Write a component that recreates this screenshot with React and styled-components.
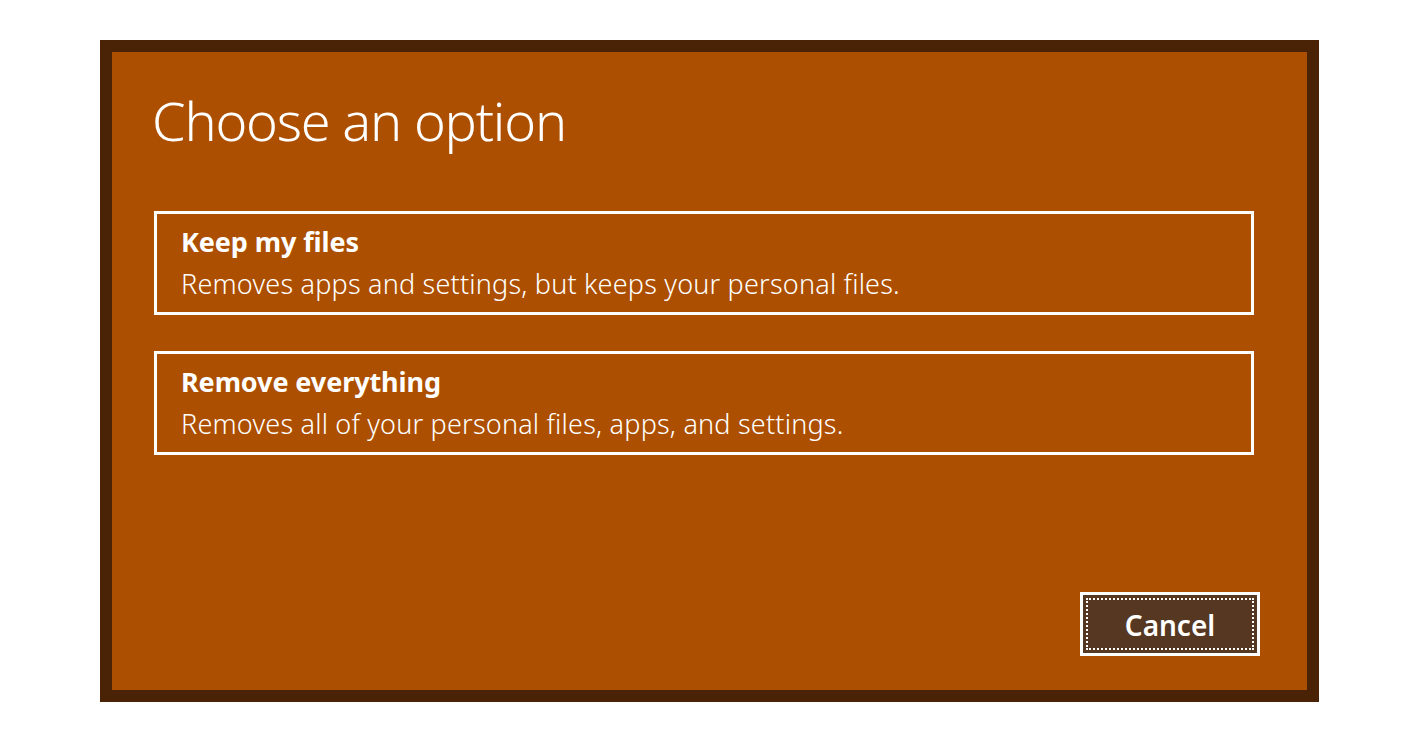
import React from "react";
import styled, { createGlobalStyle } from "styled-components";

const Global = createGlobalStyle`
  html, body { margin: 0; padding: 0; background: #ffffff; }
  body { font-family: "Noto Sans", "Open Sans", sans-serif; }
`;

const Page = styled.div`
  width: 1419px;
  height: 742px;
  box-sizing: border-box;
  padding: 40px 100px;
  background: #ffffff;
`;

const Frame = styled.div`
  box-sizing: border-box;
  width: 1219px;
  height: 662px;
  border: 12px solid #4a2306;
  background: #ad4f00;
  display: flex;
  flex-direction: column;
  padding: 0 53px 34px 42px;
`;

const Title = styled.h1`
  margin: 28px 0 0 -2px;
  height: 80px;
  font-size: 54px;
  line-height: 80px;
  font-weight: 300;
  letter-spacing: -1.2px;
  color: #ffffff;
`;

const Options = styled.div`
  margin-top: 51px;
  display: flex;
  flex-direction: column;
  gap: 36px;
`;

const Option = styled.button`
  box-sizing: border-box;
  width: 1100px;
  height: 104px;
  border: 3px solid #ffffff;
  background: transparent;
  text-align: left;
  padding: 10px 0 0 24px;
  color: #ffffff;
  font-family: "Noto Sans", "Open Sans", sans-serif;
  display: flex;
  flex-direction: column;
  cursor: pointer;
`;

const OptionName = styled.span`
  font-size: 27px;
  line-height: 36px;
  font-weight: 700;
  letter-spacing: -0.1px;
`;

const OptionDesc = styled.span`
  margin-top: 6px;
  font-size: 27px;
  line-height: 36px;
  font-weight: 300;
  letter-spacing: 0.2px;
`;

const Footer = styled.div`
  margin-top: auto;
  display: flex;
  justify-content: flex-end;
  margin-right: -6px;
`;

const CancelButton = styled.button`
  box-sizing: border-box;
  width: 180px;
  height: 64px;
  border: 3px solid #ffffff;
  background: #563822;
  padding: 3px;
  color: #ffffff;
  font-family: "Noto Sans", "Open Sans", sans-serif;
  cursor: pointer;
  display: flex;
`;

const FocusRing = styled.span`
  flex: 1;
  display: flex;
  align-items: center;
  justify-content: center;
  border: 2px dotted #ffffff;
  font-size: 28px;
  font-weight: 600;
  padding-top: 2px;
`;

const options = [
  {
    name: "Keep my files",
    desc: "Removes apps and settings, but keeps your personal files.",
  },
  {
    name: "Remove everything",
    desc: "Removes all of your personal files, apps, and settings.",
  },
];

export default function App() {
  return (
    <Page>
      <Global />
      <Frame>
        <Title>Choose an option</Title>
        <Options>
          {options.map((o) => (
            <Option key={o.name}>
              <OptionName>{o.name}</OptionName>
              <OptionDesc>{o.desc}</OptionDesc>
            </Option>
          ))}
        </Options>
        <Footer>
          <CancelButton>
            <FocusRing>Cancel</FocusRing>
          </CancelButton>
        </Footer>
      </Frame>
    </Page>
  );
}
